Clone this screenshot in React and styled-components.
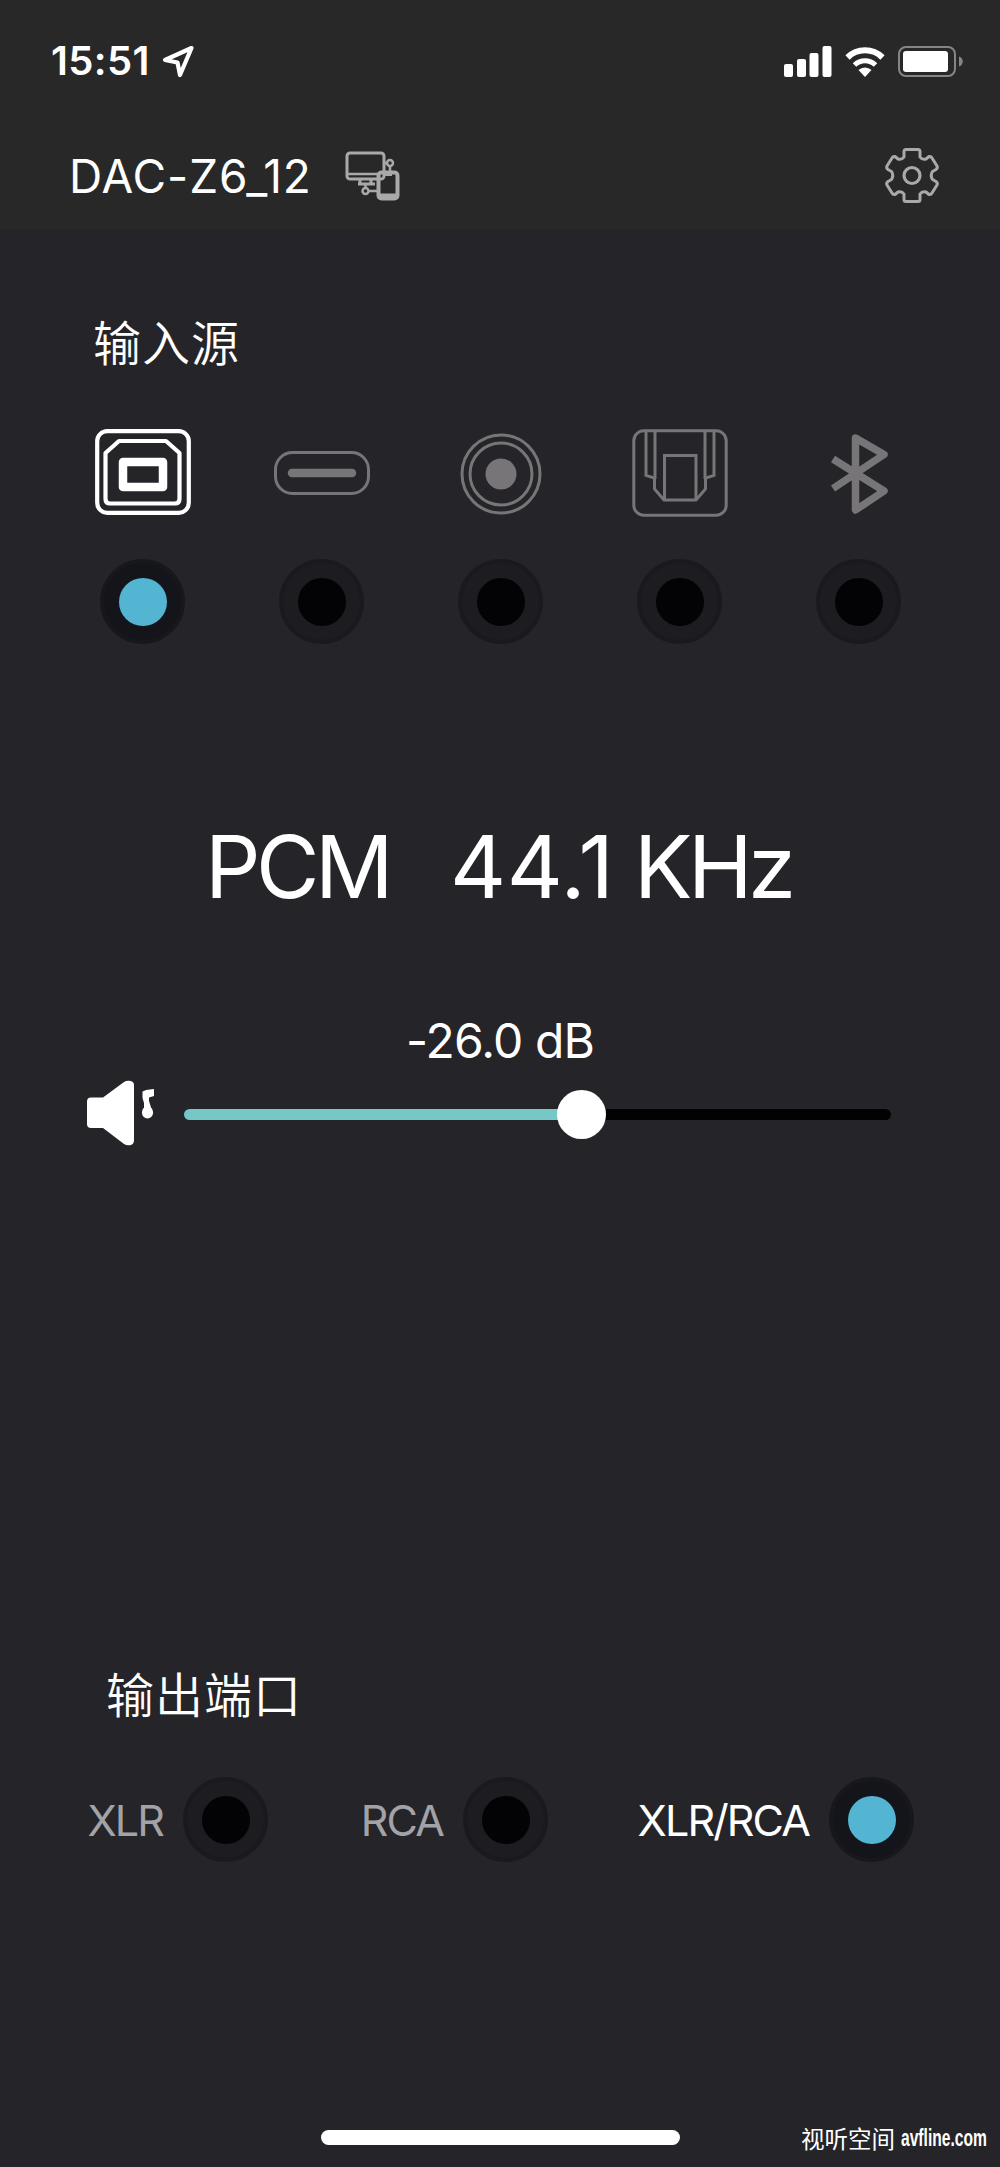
import { useState } from "react";
import styled, { createGlobalStyle } from "styled-components";

const GlobalStyle = createGlobalStyle`
  * {
    box-sizing: border-box;
  }

  body {
    margin: 0;
    background: #252429;
  }

  button {
    padding: 0;
    border: none;
    background: none;
    font: inherit;
    color: inherit;
    cursor: pointer;
  }

  svg {
    display: block;
  }
`;

const Container = styled.div`
  width: 1000px;
  height: 2167px;
  display: flex;
  flex-direction: column;
  overflow: hidden;
  background: #252429;
  color: #fff;
  font-family: Inter, "Noto Sans CJK SC", sans-serif;
`;

const Top = styled.header`
  height: 229px;
  flex: none;
  background: #282828;
`;

const StatusBar = styled.div`
  height: 122px;
  padding: 0 36px 0 51px;
  display: flex;
  align-items: center;
  justify-content: space-between;
`;

const StatusGroup = styled.div`
  display: flex;
  align-items: center;
  gap: ${(props) => props.gap};
`;

const Time = styled.span`
  font-size: 40px;
  font-weight: 600;
  line-height: 48px;
  letter-spacing: 0.4px;
`;

const NavBar = styled.div`
  height: 107px;
  padding: 0 60px 0 69px;
  display: flex;
  align-items: flex-start;
  justify-content: space-between;
`;

const Device = styled.div`
  display: flex;
  align-items: center;
  gap: 31px;
  padding-top: 24px;
`;

const DeviceName = styled.h1`
  width: 245px;
  margin: 0;
  font-size: 46px;
  font-weight: 400;
  line-height: 60px;
  letter-spacing: 0.9px;
  white-space: nowrap;
`;

const SettingsButton = styled.button`
  padding-top: 25px;
`;

const SectionTitle = styled.h2`
  margin: 0;
  padding-left: ${(props) => props.indent};
  font-family: "Noto Sans CJK SC", sans-serif;
  font-size: 48px;
  font-weight: 350;
  line-height: 60px;
  letter-spacing: 1px;
`;

const Inputs = styled.section`
  padding-top: 81px;
`;

const InputList = styled.div`
  margin: 45px 52px 0 53px;
  display: grid;
  grid-template-columns: repeat(5, 1fr);
`;

const InputItem = styled.button`
  display: flex;
  flex-direction: column;
  align-items: center;
  gap: 30px;
  color: ${(props) => (props.$active ? "#fff" : "#777577")};
`;

const IconSlot = styled.span`
  height: 114px;
  display: flex;
  align-items: center;
`;

const Ring = styled.span`
  flex: none;
  width: 85px;
  height: 85px;
  display: flex;
  align-items: center;
  justify-content: center;
  border: 4px solid ${(props) => (props.$active ? "#17171c" : "#19191e")};
  border-radius: 50%;
  background: ${(props) => (props.$active ? "#14151b" : "#1c1c21")};
`;

const Dot = styled.span`
  width: 48px;
  height: 48px;
  border-radius: 50%;
  background: ${(props) => (props.$active ? "#54b5d3" : "#030204")};
`;

const Format = styled.div`
  margin-top: 170px;
  padding-left: 205px;
  display: flex;
  font-size: 87px;
  font-weight: 400;
  line-height: 106px;
  white-space: pre;
`;

const FormatPart = styled.span`
  width: ${(props) => props.width};
  letter-spacing: ${(props) => props.spacing};
`;

const Volume = styled.section`
  margin-top: 92px;
`;

const VolumeValue = styled.div`
  text-align: center;
  font-size: 48px;
  font-weight: 400;
  line-height: 58px;
  letter-spacing: -0.9px;
`;

const VolumeRow = styled.div`
  height: 70px;
  margin-top: 8px;
  padding: 0 109px 0 86px;
  display: flex;
  align-items: center;
  gap: 28px;
`;

const Slider = styled.div`
  position: relative;
  flex: 1;
  height: 11px;
  margin-top: 2px;
  border-radius: 6px;
  background: #020203;
`;

const SliderFill = styled.div`
  height: 100%;
  border-radius: 6px;
  background: #76c8c8;
`;

const Thumb = styled.div`
  position: absolute;
  top: -19px;
  width: 49px;
  height: 49px;
  margin-left: -24px;
  border-radius: 50%;
  background: #fff;
`;

const Outputs = styled.section`
  margin-top: 514px;
`;

const OutputList = styled.div`
  margin-top: 55px;
  padding-left: 80px;
  display: grid;
  grid-template-columns: 188px 280px 366px;
  justify-items: end;
`;

const OutputItem = styled.button`
  display: flex;
  align-items: center;
  gap: 20px;
  font-size: 43px;
  font-weight: 400;
  letter-spacing: -1.9px;
  color: ${(props) => (props.$active ? "#fff" : "#a3a2a6")};
`;

const Footer = styled.footer`
  margin-top: auto;
  height: 60px;
  padding: 0 15px 0 321px;
  display: flex;
  justify-content: space-between;
`;

const HomeIndicator = styled.div`
  width: 359px;
  height: 15px;
  margin-top: 23px;
  border-radius: 8px;
  background: #fff;
`;

const Credit = styled.div`
  height: 36px;
  margin-top: 13px;
  display: flex;
  align-items: center;
  gap: 6px;
  font-family: "Noto Sans CJK SC", sans-serif;
  font-size: 23.5px;
  line-height: 36px;
`;

const Site = styled.span`
  width: 84px;
  font-family: "Liberation Sans Narrow", "Liberation Sans", sans-serif;
  font-size: 24px;
  font-weight: 700;
  white-space: nowrap;
  transform: scaleX(0.65);
  transform-origin: left center;
`;

const LocationIcon = () => (
  <svg width="33" height="33" viewBox="0 0 33 33" fill="none" stroke="#fff">
    <path d="M29.500 3 3 15 15.500 17.500 18 30Z" strokeWidth="4.200" strokeLinejoin="round" />
  </svg>
);

const SignalIcon = () => (
  <svg width="48" height="31" viewBox="0 0 48 31" fill="#fff">
    <rect x="0" y="18" width="9" height="13" rx="2" />
    <rect x="13" y="13" width="9" height="18" rx="2" />
    <rect x="25.500" y="7" width="9" height="24" rx="2" />
    <rect x="38.500" y="0" width="9" height="31" rx="2" />
  </svg>
);

const WifiIcon = () => (
  <svg width="40" height="31" viewBox="0 0 40 31" fill="none" stroke="#fff">
    <path d="M2.500 11.500a25 25 0 0 1 35 0" strokeWidth="6" />
    <path d="M9.500 19a15 15 0 0 1 21 0" strokeWidth="5" />
    <path d="M13.500 24a9.500 9.500 0 0 1 13 0L20 31Z" fill="#fff" stroke="none" />
  </svg>
);

const BatteryIcon = () => (
  <svg width="66" height="31" viewBox="0 0 66 31">
    <rect x="1" y="1" width="56" height="29" rx="7" fill="none" stroke="#858585" strokeWidth="2" />
    <rect x="5" y="5" width="45" height="21" rx="3" fill="#fff" />
    <path d="M61 10.500c5 1.500 5 8.500 0 10Z" fill="#858585" />
  </svg>
);

const DevicesIcon = () => (
  <svg width="55" height="52" viewBox="0 0 55 52" fill="none" stroke="#a9a9a9">
    <rect x="2" y="3" width="37" height="26" rx="3" strokeWidth="3" />
    <path d="M2 24H33" strokeWidth="2.500" />
    <path d="M15 29v4M26 29v4M13 34h17" strokeWidth="3" />
    <circle cx="20.500" cy="41" r="3" strokeWidth="2.500" />
    <path d="M20.500 35v3M24 41h9" strokeWidth="2.500" />
    <circle cx="45" cy="13" r="3" strokeWidth="2.500" />
    <path d="M39 13h3M45 16v6" strokeWidth="2.500" />
    <rect x="33.500" y="22.500" width="19" height="26" rx="3" strokeWidth="4" />
    <path d="M33 46H53" strokeWidth="5" />
    <path d="M39 25h8" strokeWidth="2" />
  </svg>
);

const GearIcon = () => (
  <svg width="56" height="56" viewBox="0 0 56 56" fill="none" stroke="#a9a9a9">
    <path
      d="M20 4.500Q20 2.500 22 2.500H34Q36 2.500 36 4.500V10Q38 13 42 12L45 9.500Q47 9 48 11L53 19Q54 21 52 22.500L48.500 24.500Q46 28.500 48.500 32.500L52 34.500Q54 36 53 38L48 46Q47 48 45 47.500L42 45Q38 44 36 47V52.500Q36 54.500 34 54.500H22Q20 54.500 20 52.500V47Q18 44 14 45L11 47.500Q9 48 8 46L3 38Q2 36 4 34.500L7.500 32.500Q10 28.500 7.500 24.500L4 22.500Q2 21 3 19L8 11Q9 9 11 9.500L14 12Q18 13 20 10Z"
      strokeWidth="3"
      strokeLinejoin="round"
    />
    <circle cx="28" cy="28.500" r="8" strokeWidth="3.200" />
  </svg>
);

const UsbBIcon = () => (
  <svg width="96" height="86" viewBox="0 0 96 86" fill="none" stroke="currentColor">
    <rect x="2.200" y="2.200" width="91.600" height="81.600" rx="10" strokeWidth="4.200" />
    <path
      d="M24 12H71L84.500 24V70Q84.500 74.500 80 74.500H15Q10.500 74.500 10.500 70V24Z"
      strokeWidth="4.200"
      strokeLinejoin="round"
    />
    <rect x="28" y="33" width="40" height="25" strokeWidth="8.500" strokeLinejoin="round" />
  </svg>
);

const UsbCIcon = () => (
  <svg width="96" height="46" viewBox="0 -2 96 46" fill="none" stroke="currentColor">
    <rect x="1.500" y="1.500" width="93" height="41" rx="17" strokeWidth="3" />
    <path d="M18 22H78" strokeWidth="8.500" strokeLinecap="round" />
  </svg>
);

const CoaxialIcon = () => (
  <svg width="82" height="86" viewBox="0 -4 82 86" fill="none" stroke="currentColor">
    <circle cx="41" cy="41" r="39" strokeWidth="3" />
    <circle cx="41" cy="41" r="31" strokeWidth="3" />
    <circle cx="41" cy="41" r="15.500" fill="currentColor" stroke="none" />
  </svg>
);

const OpticalIcon = () => (
  <svg width="96" height="90" viewBox="0 -2 96 90" fill="none" stroke="currentColor" strokeWidth="3">
    <rect x="1.800" y="1.800" width="92.400" height="84.400" rx="10" />
    <path d="M14 2V46.500L22.500 49V60L32 71H64L73.500 60V49L82 46.500V2" />
    <path d="M23 2V50M73 2V50" />
    <path d="M32.500 71V26.500H64V71" />
  </svg>
);

const BluetoothIcon = () => (
  <svg width="58" height="86" viewBox="0 -4 58 86" fill="none" stroke="currentColor">
    <path d="M3 26 54 58 25.500 77V5L54 21.500 3 55.500" strokeWidth="7.500" strokeLinejoin="round" />
  </svg>
);

const SpeakerIcon = () => (
  <svg width="70" height="68" viewBox="0 0 70 68" fill="#fff">
    <path d="M5 18.500H17L38 3Q41 1 45 2Q48 3 48 6V61Q48 65 45 66Q41 67 38 65L17 49H5Q1 49 1 45V22.500Q1 18.500 5 18.500Z" />
    <ellipse cx="61.500" cy="33.500" rx="5.600" ry="6" />
    <path d="M56.500 12.500Q60 10.500 64 10.500L68 10V17L63 18.500V22L65.500 30H58V24L56.500 19Z" />
  </svg>
);

const inputs = [
  { id: "usb-b", Icon: UsbBIcon },
  { id: "usb-c", Icon: UsbCIcon },
  { id: "coaxial", Icon: CoaxialIcon },
  { id: "optical", Icon: OpticalIcon },
  { id: "bluetooth", Icon: BluetoothIcon },
];

const outputs = ["XLR", "RCA", "XLR/RCA"];

const Radio = ({ active }) => (
  <Ring $active={active}>
    <Dot $active={active} />
  </Ring>
);

const App = () => {
  const [input, setInput] = useState("usb-b");
  const [output, setOutput] = useState("XLR/RCA");
  const level = 56.2;

  return (
    <Container>
      <GlobalStyle />
      <Top>
        <StatusBar>
          <StatusGroup gap="12px">
            <Time>15:51</Time>
            <LocationIcon />
          </StatusGroup>
          <StatusGroup gap="13px">
            <SignalIcon />
            <WifiIcon />
            <BatteryIcon />
          </StatusGroup>
        </StatusBar>
        <NavBar>
          <Device>
            <DeviceName>DAC-Z6_12</DeviceName>
            <DevicesIcon />
          </Device>
          <SettingsButton aria-label="settings">
            <GearIcon />
          </SettingsButton>
        </NavBar>
      </Top>

      <Inputs>
        <SectionTitle indent="93px">输入源</SectionTitle>
        <InputList>
          {inputs.map(({ id, Icon }) => (
            <InputItem key={id} $active={id === input} onClick={() => setInput(id)}>
              <IconSlot>
                <Icon />
              </IconSlot>
              <Radio active={id === input} />
            </InputItem>
          ))}
        </InputList>
      </Inputs>

      <Format>
        <FormatPart width="245px" spacing="-4.5px">
          PCM
        </FormatPart>
        <FormatPart width="184px" spacing="0.5px">
          44.1
        </FormatPart>
        <FormatPart spacing="-4.5px">KHz</FormatPart>
      </Format>

      <Volume>
        <VolumeValue>-26.0 dB</VolumeValue>
        <VolumeRow>
          <SpeakerIcon />
          <Slider>
            <SliderFill style={{ width: `${level}%` }} />
            <Thumb style={{ left: `${level}%` }} />
          </Slider>
        </VolumeRow>
      </Volume>

      <Outputs>
        <SectionTitle indent="106px">输出端口</SectionTitle>
        <OutputList>
          {outputs.map((name) => (
            <OutputItem key={name} $active={name === output} onClick={() => setOutput(name)}>
              {name}
              <Radio active={name === output} />
            </OutputItem>
          ))}
        </OutputList>
      </Outputs>

      <Footer>
        <HomeIndicator />
        <Credit>
          视听空间 <Site>avfline.com</Site>
        </Credit>
      </Footer>
    </Container>
  );
};

export default App;
